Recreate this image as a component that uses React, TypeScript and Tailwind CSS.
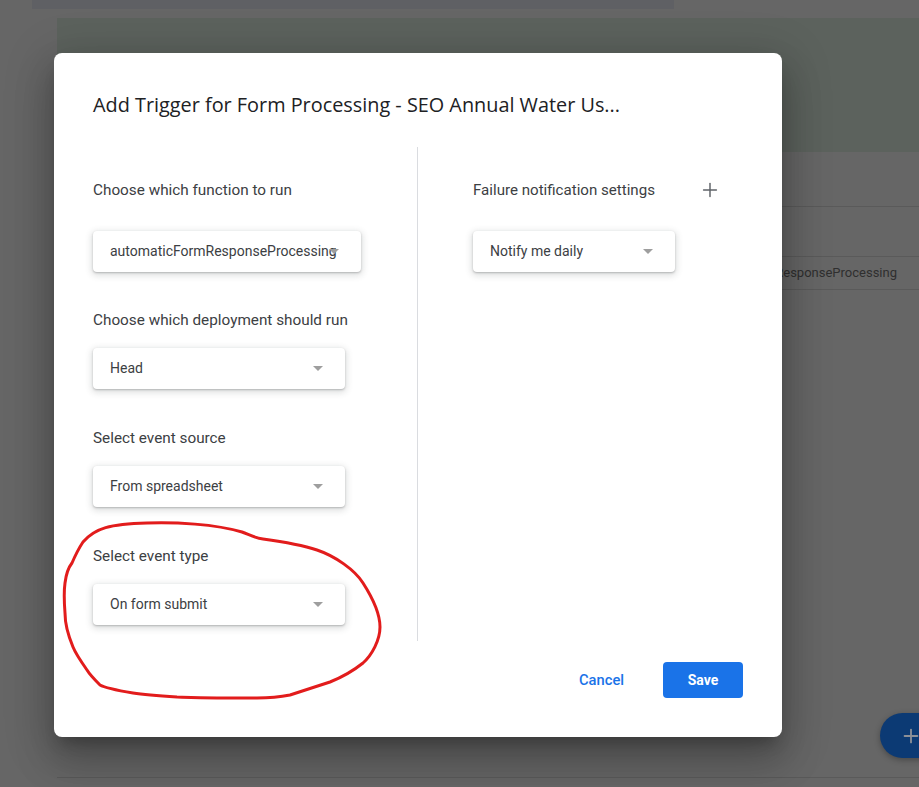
import { Plus } from "lucide-react";

const roboto = { fontFamily: "Roboto, 'Liberation Sans', sans-serif" };

function Caret() {
  return (
    <svg width="10" height="5" viewBox="0 0 10 5" className="shrink-0">
      <path d="M0 0h10L5 5z" fill="#9e9e9e" />
    </svg>
  );
}

function Dropdown({ value, width }: { value: string; width: string }) {
  return (
    <div
      className={`relative flex h-[41px] items-center rounded-[4px] bg-white pl-[17px] shadow-[0_1px_2px_rgba(60,64,67,0.3),0_2px_6px_2px_rgba(60,64,67,0.15)] ${width}`}
    >
      <span className="whitespace-nowrap text-[14px] text-[#3c4043]">{value}</span>
      <span className="absolute right-[22px] top-[18px] flex">
        <Caret />
      </span>
    </div>
  );
}

function Field({ label, value, width, gap, top }: { label: string; value: string; width: string; gap: string; top: string }) {
  return (
    <div className={`flex flex-col ${top}`}>
      <div className={`text-[15.3px] leading-[18px] text-[#3c4043] ${gap}`}>{label}</div>
      <Dropdown value={value} width={width} />
    </div>
  );
}

export default function App() {
  return (
    <div className="relative h-[787px] w-[919px] overflow-hidden bg-[#666666]" style={roboto}>
      {/* page behind the overlay */}
      <div className="flex h-full flex-col">
        <div className="ml-[32px] h-[9px] w-[642px] bg-[#5f6064]" />
        <div className="ml-[57px] mt-[9px] h-[134px] bg-[#5c625d]" />
        <div className="ml-[57px] h-[55px] border-b border-[#5a5a5a]" />
        <div className="ml-[57px] h-[50px] border-b border-[#5a5a5a]" />
        <div className="ml-[57px] flex h-[33px] items-center justify-end border-b border-[#5a5a5a] pr-[22px]">
          <span className="text-[13px] text-[#2f2f2f]">automaticFormResponseProcessing</span>
        </div>
        <div className="ml-[57px] h-[488px] border-b border-[#5a5a5a]" />
      </div>

      {/* floating action button */}
      <div className="absolute left-[880px] top-[713px] flex h-[45px] w-[80px] items-center rounded-full bg-[#0c3a74] pl-[20px] shadow-[0_2px_6px_rgba(0,0,0,0.3)]">
        <Plus size={22} strokeWidth={2} color="#8d9097" />
      </div>

      {/* dialog */}
      <div className="absolute left-[54px] top-[53px] flex h-[684px] w-[728px] flex-col rounded-[8px] bg-white px-[39px] pb-[39px] pt-[39px] shadow-[0_11px_15px_-7px_rgba(0,0,0,0.25),0_24px_38px_3px_rgba(0,0,0,0.18),0_9px_46px_8px_rgba(0,0,0,0.15)]">
        <h2 className="text-[19.85px] leading-[26px] text-[#202124]" style={{ fontFamily: "'Open Sans', Roboto, sans-serif" }}>
          Add Trigger for Form Processing - SEO Annual Water Us...
        </h2>

        <div className="mt-[29px] flex">
          <div className="flex w-[324px] flex-col pt-[34px]">
            <Field label="Choose which function to run" value="automaticFormResponseProcessing" width="w-[268px]" gap="mb-[32px]" top="" />
            <Field label="Choose which deployment should run" value="Head" width="w-[252px]" gap="mb-[19px]" top="mt-[39px]" />
            <Field label="Select event source" value="From spreadsheet" width="w-[252px]" gap="mb-[19px]" top="mt-[40px]" />
            <Field label="Select event type" value="On form submit" width="w-[252px]" gap="mb-[19px]" top="mt-[40px]" />
          </div>
          <div className="h-[494px] w-px bg-[#dadce0]" />
          <div className="flex flex-1 flex-col pl-[55px] pt-[34px]">
            <div className="mb-[32px] flex h-[18px] items-center">
              <span className="text-[15.1px] leading-[18px] text-[#3c4043]">Failure notification settings</span>
              <span className="ml-[44px] flex">
                <Plus size={22} strokeWidth={1.6} color="#5f6368" />
              </span>
            </div>
            <Dropdown value="Notify me daily" width="w-[202px]" />
          </div>
        </div>

        <div className="mt-auto flex items-center justify-end gap-[39px]">
          <button className="text-[14.7px] font-medium text-[#1a73e8]">Cancel</button>
          <button className="h-[36px] w-[80px] rounded-[4px] bg-[#1a73e8] text-[14px] font-bold text-white">Save</button>
        </div>
      </div>

      {/* hand-drawn annotation */}
      <svg className="pointer-events-none absolute left-0 top-0" width="919" height="787">
        <path
          d="M83 542 C 95 528 110 524 147 523 C 175 522 215 524 242 532 C 250 535 255 538 263 539 C 285 542 305 546 317 550 C 335 556 355 570 363 583 C 372 597 380 612 380 627 C 380 640 372 655 363 663 C 353 671 340 678 330 682 C 318 686 305 690 290 695 C 275 698 265 698 257 698 C 240 698 225 698 217 698 C 195 698 180 697 177 697 C 160 696 145 695 133 693 C 115 690 105 688 100 685 C 95 680 90 675 87 670 C 80 660 75 652 73 647 C 68 635 65 625 65 613 C 64 600 64 590 65 583 C 66 575 68 568 72 563 C 75 556 79 548 83 542 Z"
          fill="none"
          stroke="#e21c1c"
          strokeWidth="3"
          strokeLinejoin="round"
        />
      </svg>
    </div>
  );
}
